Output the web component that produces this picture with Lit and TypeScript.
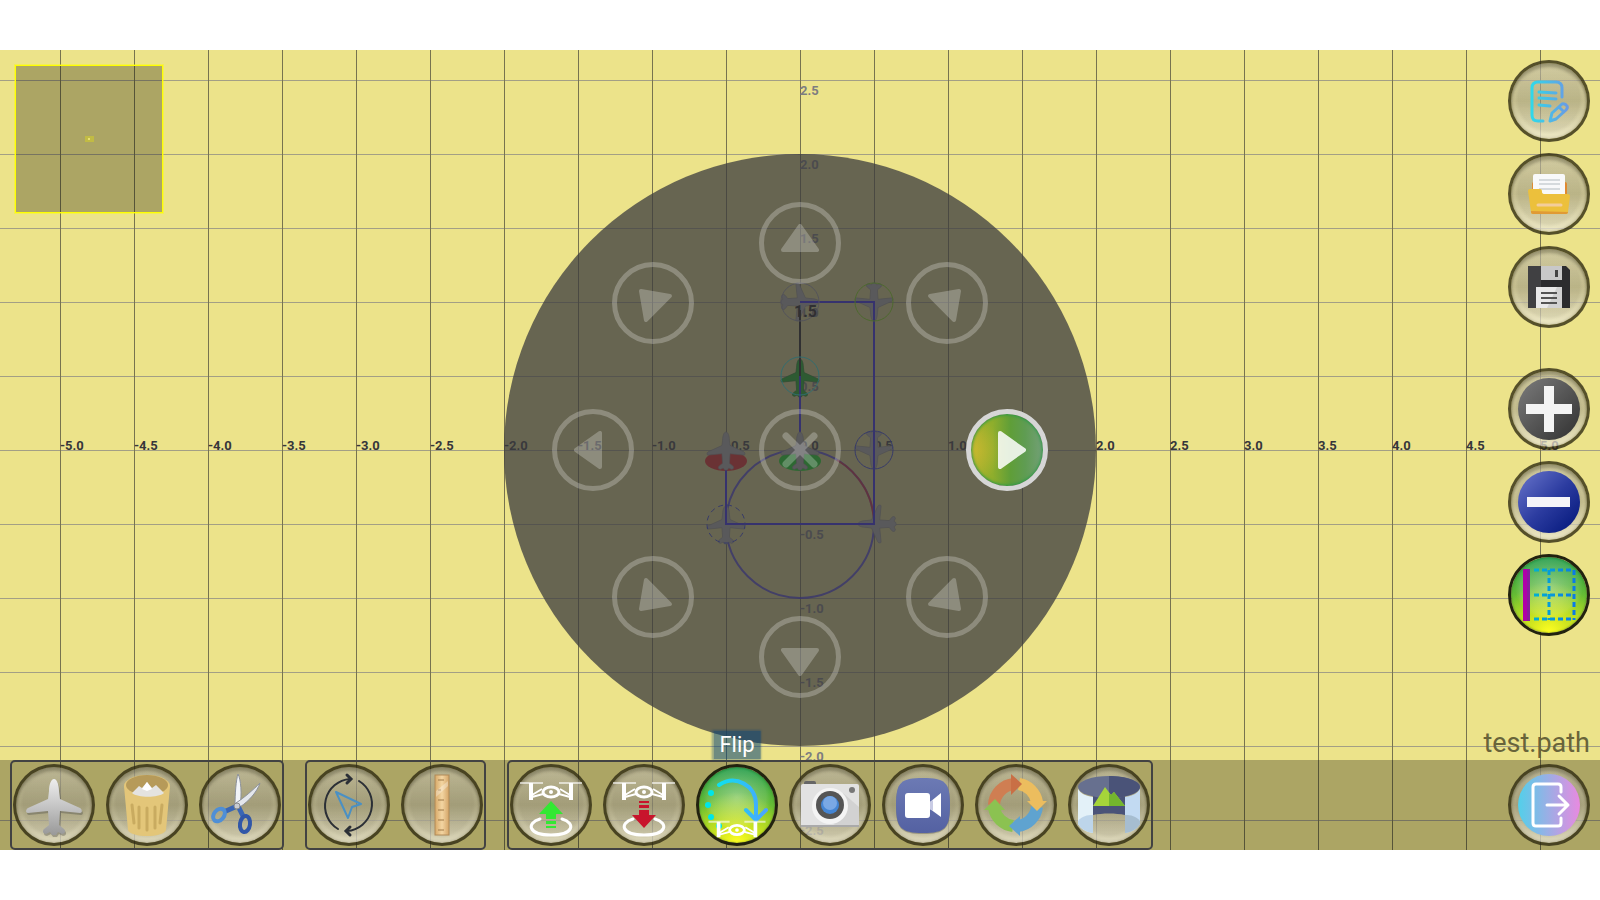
import { LitElement, html, svg, css, type TemplateResult, type SVGTemplateResult } from "lit";
import { customElement, state } from "lit/decorators.js";
import { classMap } from "lit/directives/class-map.js";

const CELL = 74;

const PLANE =
  "M0 -28C3 -28 5 -22 5 -16L6 -8L26 1C28 2 29 6 26 6L6 4L5 18L10 22C12 24 11 27 8 27L4 25L2 28H-2L-4 25L-8 27C-11 27 -12 24 -10 22L-5 18L-6 4L-26 6C-29 6 -28 2 -26 1L-6 -8L-5 -16C-5 -22 -3 -28 0 -28Z";

/* Quadcopter outline centred on its body. */
const drone = svg`
  <g fill="none" stroke="#fff">
    <path d="M-31 -9H-8M8 -9H31" stroke-width="2" stroke-opacity=".6"/>
    <path d="M-20 -9V8M20 -9V8" stroke-width="4"/>
    <path d="M-19 3L-9 -3M19 3L9 -3M-19 5L-8 2M19 5L8 2" stroke-width="2"/>
    <ellipse rx="8" ry="5" stroke-width="3"/>
    <circle r="2" fill="#fff" stroke="none"/>
  </g>`;

const landingRing = svg`<path d="M30 55C16 59 18 71 41 71S66 59 52 55" fill="none" stroke="#fff" stroke-width="3" stroke-linecap="round"/>`;

const icons: Record<string, SVGTemplateResult> = {
  plane: svg`
    <defs><linearGradient id="pl" x2="0" y2="1"><stop stop-color="#eee"/><stop offset="1" stop-color="#999"/></linearGradient></defs>
    <path d=${PLANE} transform="translate(42 45)" fill="#444" opacity=".35"/>
    <path d=${PLANE} transform="translate(41 43)" fill="url(#pl)"/>`,
  trash: svg`
    <path d="M18 22L22 66C25 74 57 74 60 66L64 22Z" fill="#e3c679"/>
    <ellipse cx="41" cy="22" rx="23" ry="11" fill="#e3c679"/>
    <ellipse cx="41" cy="21" rx="21" ry="10" fill="#b69a59"/>
    <path d="M26 29L33 22L36 24L41 18L46 24L50 21L58 29C52 34 32 34 26 29Z" fill="#e4e3e0"/>
    <path d="M36 25L41 18L46 25L41 27Z" fill="#fff"/>
    <path d="M26 41L28 59M33 43V64M41 44V66M49 43V64M56 41L54 59" stroke="#c9ab60" stroke-width="3" stroke-linecap="round"/>`,
  cut: svg`
    <path d="M39 10C42 16 43 30 41 42H36C36 30 37 16 39 10Z" fill="#f2f4f7" stroke="#8d929b"/>
    <path d="M61 19C58 28 50 37 41 43L37 39C45 34 55 25 61 19Z" fill="#e4e7ec" stroke="#8d929b"/>
    <path d="M36 43L27 47M40 44L44 52" stroke="#3a66b4" stroke-width="5" stroke-linecap="round"/>
    <ellipse cx="20" cy="51" rx="5" ry="7" transform="rotate(40 20 51)" fill="none" stroke="#4f8fd6" stroke-width="4"/>
    <ellipse cx="46" cy="60" rx="5" ry="8" transform="rotate(8 46 60)" fill="none" stroke="#3157a8" stroke-width="4"/>
    <circle cx="38" cy="42" r="3" fill="#c9ccd2" stroke="#888"/>`,
  rotate: svg`
    <path d="M30 65A27 27 0 0 1 42 15M51 17A27 27 0 0 1 39 67" fill="none" stroke="#2b2f36" stroke-width="2" stroke-linecap="round"/>
    <path d="M39 11L43 15L39 19M42 63L38 67L42 71" fill="none" stroke="#2b2f36" stroke-width="3" stroke-linecap="round"/>
    <path d="M28 28L53 40L44 43L40 54Z" fill="none" stroke="#4a90c4" stroke-width="2" stroke-linejoin="round"/>`,
  ruler: svg`
    <defs><linearGradient id="ru"><stop stop-color="#d8a968"/><stop offset=".5" stop-color="#f3d5a2"/><stop offset="1" stop-color="#d4a568"/></linearGradient></defs>
    <rect x="34" y="11" width="14" height="60" fill="url(#ru)" stroke="#b08a58"/>
    <path d="M37 16H43M37 26H40M37 36H43M37 46H43M37 56H43M37 66H43" stroke="#a07a48" stroke-width="1"/>
    <path d="M35 27L47 17V22L35 33Z" fill="#fff" opacity=".3"/>`,
  takeoff: svg`
    <g transform="translate(41 28)">${drone}</g>${landingRing}
    <path d="M41 37L53 50H46V55H36V50H29ZM36 57H46V60H36ZM36 62H46V64H36Z" fill="#33e833"/>`,
  land: svg`
    <g transform="translate(41 28)">${drone}</g>${landingRing}
    <path d="M41 64L29 51H36V46H46V51H53ZM36 41H46V44H36ZM36 37H46V39H36Z" fill="#c8142c"/>`,
  flip: svg`
    <g fill="#00e5e8"><circle cx="15" cy="29" r="3"/><circle cx="12" cy="41" r="3"/><circle cx="15" cy="53" r="3"/><circle cx="23" cy="62" r="3"/></g>
    <defs><linearGradient id="fl"><stop stop-color="#0fe0ee"/><stop offset="1" stop-color="#4aa4ff"/></linearGradient></defs>
    <path d="M23 21C40 10 60 22 60 40V55M50 46L60 56L70 46" fill="none" stroke="url(#fl)" stroke-width="4" stroke-linecap="round" stroke-linejoin="round"/>
    <g transform="translate(41 66) scale(.92)">${drone}</g>`,
  camera: svg`
    <rect x="15" y="17" width="12" height="6" rx="2" fill="#666"/>
    <rect x="12" y="20" width="58" height="43" rx="2" fill="#e2e2e2"/>
    <path d="M54 29L70 43V61Q70 63 68 63H50L29 52Z" fill="#c8c8c8" opacity=".6"/>
    <path d="M12 61H70V63H12Z" fill="#aaa"/>
    <circle cx="63" cy="26" r="3" fill="#777"/>
    <circle cx="41" cy="42" r="18" fill="#f4f4f4"/><circle cx="41" cy="41" r="14" fill="#555"/>
    <circle cx="41" cy="41" r="9" fill="#4485d4"/><circle cx="41" cy="39" r="7" fill="#7aa8e4"/>`,
  video: svg`
    <defs><linearGradient id="vi" x2="0" y2="1"><stop stop-color="#6c7ab4"/><stop offset="1" stop-color="#5461a2"/></linearGradient></defs>
    <path d="M41 15C63 15 68 19 68 42S63 70 41 70S14 65 14 42S19 15 41 15Z" fill="#333" opacity=".3"/>
    <path d="M41 14C63 14 68 18 68 41S63 69 41 69S14 64 14 41S19 14 41 14Z" fill="url(#vi)"/>
    <path d="M26 29H45Q48 29 48 32V38L59 29V53L48 45V51Q48 54 45 54H26Q23 54 23 51V32Q23 29 26 29Z" fill="#fff"/>
    <path d="M48 38L51 36V47L48 45Z" fill="#c8cbe4"/>`,
  cycle: svg`
    <g fill="none" stroke-width="12">
      <path d="M19 41A22 22 0 0 1 39 20" stroke="#cf7e52"/>
      <path d="M44 20A22 22 0 0 1 62 38" stroke="#ecbd5e"/>
      <path d="M62 43A22 22 0 0 1 43 62" stroke="#5fa3d0"/>
      <path d="M38 62A22 22 0 0 1 19 44" stroke="#8bc251"/>
    </g>
    <path d="M36 10L47 20L36 31Z" fill="#c96f45"/><path d="M52 37H72L62 47Z" fill="#ecbd5e"/>
    <path d="M45 52V72L34 62Z" fill="#5fa3d0"/><path d="M9 46L20 35L30 46Z" fill="#8bc251"/>`,
  panorama: svg`
    <path d="M25 32H57V51C48 49 34 49 25 51Z" fill="#4a5378"/>
    <ellipse cx="41" cy="23" rx="31" ry="11" fill="#67708f"/>
    <path d="M41 12C58 12 72 17 72 23S58 34 41 34Z" fill="#4a5378"/>
    <path d="M25 42L37 23L43 31L46 28L57 42Z" fill="#a6d53a"/><path d="M41 29L43 31L46 28L57 42H41Z" fill="#74b62e"/>
    <path d="M10 25C13 30 18 32 25 33V69C18 68 13 65 10 60Z" fill="#e3f1f8"/>
    <path d="M10 57C14 52 19 51 25 51V69C18 68 13 65 10 60Z" fill="#bdd5ea"/>
    <path d="M72 25C69 30 64 32 57 33V69C64 68 69 65 72 60Z" fill="#c2daf2"/>
    <path d="M72 57C68 52 63 51 57 51V69C64 68 69 65 72 60Z" fill="#a6bdd0"/>`,
  notes: svg`
    <defs><linearGradient id="no" gradientUnits="userSpaceOnUse" x1="24" x2="60"><stop stop-color="#30d8ea"/><stop offset="1" stop-color="#6a9ae4"/></linearGradient></defs>
    <g fill="none" stroke="url(#no)" stroke-width="3" stroke-linecap="round" stroke-linejoin="round">
      <path d="M35 61H30Q24 61 24 55V28Q24 22 30 22H48Q54 22 54 28V37"/>
      <path d="M31 32L48 33M31 38L48 39M31 45L42 46"/>
      <path d="M42 61L44 53L54 44Q57 43 59 46Q60 48 58 50L48 59ZM51 47L55 51"/>
    </g>`,
  folder: svg`
    <rect x="24" y="29" width="35" height="20" rx="2" fill="#e08a30"/>
    <rect x="25" y="21" width="32" height="26" rx="2" fill="#f8f9fa"/>
    <path d="M31 27H52M31 31H52M31 36H52" stroke="#d5dadd" stroke-width="2"/>
    <path d="M22 36H32Q34 36 34 39Q34 41 37 41H60Q62 41 62 43L60 59Q60 61 57 61H25Q23 61 23 59L20 38Q20 36 22 36Z" fill="#ecc03c"/>
    <path d="M23 58L23 59Q23 61 25 61H57Q60 61 60 59Z" fill="#e09a35"/>
    <path d="M30 52H53" stroke="#f3cd9c" stroke-width="3" stroke-linecap="round"/>`,
  save: svg`
    <path d="M20 20H58L62 24V62H20Z" fill="#2c2c2e"/><path d="M20 20H33V41H28V62H20Z" fill="#404042"/>
    <path d="M33 20H54V34H33Z" fill="#c8c8c8"/><path d="M47 24H50V31H47Z" fill="#444"/>
    <path d="M28 41H54V62H28Z" fill="#e9e9e9"/><path d="M49 41H54V62H39Z" fill="#d2d2d2"/>
    <path d="M33 47H49M33 52H49M33 57H49" stroke="#555" stroke-width="2"/>`,
  plus: svg`
    <defs><linearGradient id="ps" x2="1" y2="1"><stop stop-color="#7c7c7c"/><stop offset="1" stop-color="#303030"/></linearGradient></defs>
    <circle cx="41" cy="41" r="31" fill="url(#ps)"/><path d="M36 18H46V36H64V46H46V64H36V46H18V36H36Z" fill="#f4f4f4"/>`,
  minus: svg`
    <defs><linearGradient id="mi" x2="1" y2="1"><stop stop-color="#6a76cc"/><stop offset=".5" stop-color="#2c3ca0"/><stop offset="1" stop-color="#001478"/></linearGradient></defs>
    <circle cx="41" cy="41" r="31" fill="url(#mi)"/><path d="M19 36H62V46H19Z" fill="#f4f4f8"/>`,
  grid: svg`
    <defs><linearGradient id="gr" gradientUnits="userSpaceOnUse" x1="24" x2="66"><stop stop-color="#00b4d0"/><stop offset="1" stop-color="#0a7ae6"/></linearGradient></defs>
    <path d="M26 16H66M26 41H66M26 65H66M41 16V66M66 16V66" fill="none" stroke="url(#gr)" stroke-width="3" stroke-dasharray="5 3"/>
    <path d="M15 15H22V67H15Z" fill="#b000a8"/><path d="M19 15H22V67H19Z" fill="#8a1aa0"/>`,
  exit: svg`
    <defs><linearGradient id="ex"><stop stop-color="#52d0ea"/><stop offset="1" stop-color="#e88ae0"/></linearGradient></defs>
    <circle cx="41" cy="41" r="31" fill="url(#ex)"/>
    <path d="M53 28V23Q53 20 50 20H28Q25 20 25 23V59Q25 62 28 62H50Q53 62 53 59V54M39 41H60M51 32L60 41L51 50" fill="none" stroke="#fff" stroke-width="3" stroke-linecap="round" stroke-linejoin="round"/>`,
};

interface Tool { id: string; icon: string; label: string }

const GROUPS: Tool[][] = [
  [
    { id: "waypoint", icon: "plane", label: "Waypoint" },
    { id: "delete", icon: "trash", label: "Delete" },
    { id: "split", icon: "cut", label: "Split" },
  ],
  [
    { id: "rotate", icon: "rotate", label: "Rotate" },
    { id: "measure", icon: "ruler", label: "Measure" },
  ],
  [
    { id: "takeoff", icon: "takeoff", label: "Take off" },
    { id: "land", icon: "land", label: "Land" },
    { id: "flip", icon: "flip", label: "Flip" },
    { id: "photo", icon: "camera", label: "Photo" },
    { id: "video", icon: "video", label: "Video" },
    { id: "cycle", icon: "cycle", label: "Cycle" },
    { id: "panorama", icon: "panorama", label: "Panorama" },
  ],
];

const FILE_TOOLS: Tool[] = [
  { id: "notes", icon: "notes", label: "Edit notes" },
  { id: "open", icon: "folder", label: "Open" },
  { id: "save", icon: "save", label: "Save" },
];
const VIEW_TOOLS: Tool[] = [
  { id: "in", icon: "plus", label: "Zoom in" },
  { id: "out", icon: "minus", label: "Zoom out" },
  { id: "grid", icon: "grid", label: "Snap to grid" },
];

const range = (from: number, to: number) => Array.from({ length: to - from + 1 }, (_, i) => from + i);

@customElement("flight-map")
export class FlightMap extends LitElement {
  static styles = css`
    :host { display: block; }
    .map { display: block; width: 100%; height: 100%; }
    .v { stroke: #77734f; stroke-width: 1; shape-rendering: crispEdges; }
    .h { stroke: #a39f85; stroke-width: 1; shape-rendering: crispEdges; }
    .axis { font: 700 13px Roboto, sans-serif; }
    .ax { fill: #36363a; }
    .ay { fill: #7d7d80; }
    .alt { font: 700 16px Roboto, sans-serif; fill: #111; }
    .leg { fill: none; stroke: #2818ff; stroke-width: 2; }
    .dark { stroke: #111; }
    .arc { fill: none; stroke: #2818ff; stroke-width: 2; stroke-opacity: 0.75; }
    .red { stroke: #f01010; }
    .craft { fill: #b4b4b4; stroke: #8c8c8c; }
    .lead { fill: #04b810; stroke: #067810; }
    .mark { fill: none; stroke-width: 1; }
  `;

  private craft(x: number, y: number, turn = 0, lead = false) {
    return svg`<path class=${lead ? "lead" : "craft"} d=${PLANE} transform="translate(${x} ${y}) rotate(${turn}) scale(.68)"/>`;
  }

  render() {
    return html`<svg class="map" viewBox="-800 -400 1600 800" preserveAspectRatio="xMidYMid slice" role="img" aria-label="Flight path">
      ${range(-5, 5).map((i) => svg`<line class="h" x1="-800" x2="800" y1=${i * CELL} y2=${i * CELL}/>`)}
      ${range(-10, 10).map((i) => svg`<line class="v" y1="-400" y2="400" x1=${i * CELL} x2=${i * CELL}/>`)}
      ${range(-5, 5).map((i) => svg`<text class="axis ay" x="0" y=${15 - i * CELL}>${(i / 2).toFixed(1)}</text>`)}
      ${range(-10, 10).map((i) => svg`<text class="axis ax" x=${i * CELL} y="0">${(i / 2).toFixed(1)}</text>`)}
      <ellipse cx="-74" cy="11" rx="21" ry="10" fill="#f81818"/>
      <ellipse cx="0" cy="11" rx="21" ry="10" fill="#04f010"/>
      <circle class="arc" cy="74" r="74"/>
      <path class="arc red" d="M37 10A74 74 0 0 1 74 74"/>
      ${this.craft(0, -148, 90)} ${this.craft(74, -148, 180)} ${this.craft(0, -72, 0, true)}
      ${this.craft(74, 0, 180)} ${this.craft(77, 74, -90)} ${this.craft(-74, 75)}
      <path class="leg" d="M-74 10V74H74V-148H0M0 -74V0"/>
      <path class="leg dark" d="M0 -140V-74"/>
      ${this.craft(-74, 1)} ${this.craft(0, 1)}
      <circle class="mark" cy="-148" r="19" stroke="#9a9ab0"/>
      <circle class="mark" cx="74" cy="-148" r="19" stroke="#80f000"/>
      <circle class="mark" cy="-74" r="19" stroke="#18ffff"/>
      <circle class="mark" cx="74" r="19" stroke="#2838e8"/>
      <circle class="mark" cx="-74" cy="74" r="19" stroke="#2838e8" stroke-dasharray="5 4"/>
      <text class="alt" x="-6" y="-133">1.5</text>
    </svg>`;
  }
}

@customElement("app-root")
export class AppRoot extends LitElement {
  @state() private tool = "flip";
  @state() private direction = 90;

  static styles = css`
    :host {
      display: grid;
      align-items: center;
      min-height: 100vh;
      background: #fff;
      font-family: Roboto, sans-serif;
    }
    .stage {
      display: grid;
      aspect-ratio: 2 / 1;
      overflow: hidden;
      background: #ece38a;
    }
    .stage > * { grid-area: 1 / 1; min-width: 0; min-height: 0; }
    button { padding: 0; margin: 0; font: inherit; cursor: pointer; }

    .wheel {
      position: relative;
      place-self: center;
      width: 37%;
      aspect-ratio: 1;
      border-radius: 50%;
      background: rgba(59, 59, 62, 0.75);
    }
    .spoke {
      position: absolute;
      width: 82px;
      height: 82px;
      transform: translate(-50%, -50%);
      box-sizing: border-box;
      border: 5px solid rgba(255, 255, 255, 0.25);
      border-radius: 50%;
      background: none;
    }
    .spoke svg { display: block; width: 72px; height: 72px; }
    .glyph { fill: #fff; stroke: #fff; stroke-width: 4; stroke-linejoin: round; stroke-linecap: round; opacity: 0.25; }
    .cross { stroke-width: 7; }
    .spoke.on {
      border-color: #d6d6d6;
      background:
        radial-gradient(circle at 0% 50%, rgba(230, 190, 50, 0.6), transparent 40%),
        linear-gradient(90deg, #a4b02c, #8fae2c 30%, #5f9e38 55%, #5f9c52 75%, #74a078);
      background-clip: padding-box;
      box-shadow: inset 0 0 3px 1px #2f9a48;
    }
    .on .glyph { opacity: 0.85; }

    .ui { position: relative; display: flex; flex-direction: column; pointer-events: none; }
    .ui button { pointer-events: auto; }
    .upper {
      flex: 1;
      display: flex;
      justify-content: space-between;
      align-items: stretch;
      padding: 10px 10px 0 15px;
    }
    .mini {
      display: grid;
      place-items: center;
      width: 148px;
      height: 148px;
      margin-top: 5px;
      box-sizing: border-box;
      border: 1px solid #ff0;
      outline: 1px solid rgba(255, 255, 0, 0.4);
      background: rgba(0, 0, 0, 0.27);
    }
    .view {
      display: grid;
      place-items: center;
      width: 9px;
      height: 6px;
      background: rgba(225, 220, 20, 0.4);
    }
    .view::after { content: ""; width: 2px; height: 2px; background: #e8e070; }
    .side { display: flex; flex-direction: column; align-items: flex-end; }
    .stack { display: grid; gap: 11px; }
    .stack + .stack { margin-top: 40px; }
    .file { margin-top: auto; font-size: 27px; line-height: 34px; color: #68643a; }

    .bar {
      display: flex;
      align-items: center;
      gap: 21px;
      padding: 0 10px;
      background: rgba(0, 0, 0, 0.27);
    }
    .group {
      display: flex;
      align-items: center;
      gap: 11px;
      height: 90px;
      box-sizing: border-box;
      padding: 0 1px;
      border: 2px solid #424242;
      border-radius: 5px;
    }
    .exit { margin-left: auto; display: flex; }

    .orb {
      position: relative;
      display: block;
      width: 82px;
      height: 82px;
      box-sizing: border-box;
      border: 3px solid rgba(48, 43, 18, 0.8);
      border-radius: 50%;
      background:
        radial-gradient(ellipse 34px 36px at 50% 46%, rgba(80, 74, 50, 0.08) 90%, transparent 100%),
        linear-gradient(rgba(212, 207, 188, 0.65), rgba(168, 163, 145, 0.6) 50%, rgba(238, 234, 218, 0.75));
      background-clip: padding-box;
      box-shadow: inset 0 4px 3px rgba(60, 55, 35, 0.32), inset 0 0 3px rgba(60, 55, 35, 0.4);
    }
    .orb.on {
      border-color: #22220f;
      background:
        radial-gradient(ellipse 34px 32px at 50% 40%, rgba(255, 255, 255, 0.36), rgba(255, 255, 255, 0.12) 85%, transparent 100%),
        radial-gradient(circle at 50% 100%, #ff2 0, rgba(225, 235, 30, 0.8) 22%, transparent 60%),
        linear-gradient(#1f9a48, #66bc34 50%, #a8d820);
      background-clip: padding-box;
      box-shadow: inset 0 0 2px rgba(20, 60, 10, 0.5);
    }
    .orb svg { position: absolute; inset: -3px; width: 82px; height: 82px; }
    .tip {
      position: absolute;
      left: 50%;
      bottom: 100%;
      margin-bottom: 8px;
      padding: 0 6px;
      transform: translateX(-50%);
      font-size: 22px;
      line-height: 28px;
      color: #fff;
      background: rgba(8, 68, 120, 0.55);
      box-shadow: 0 0 2px 1px rgba(8, 68, 120, 0.4);
    }
  `;

  private orb(t: Tool, on: boolean, tip = false): TemplateResult {
    return html`<button class=${classMap({ orb: true, on })} aria-label=${t.label} @click=${() => this.pick(t.id)}>
      <svg viewBox="0 0 82 82" aria-hidden="true">${icons[t.icon]}</svg>
      ${tip ? html`<span class="tip">${t.label}</span>` : null}
    </button>`;
  }

  private pick(id: string) {
    if (GROUPS.some((g) => g.some((t) => t.id === id))) this.tool = id;
  }

  private spoke(angle: number) {
    const a = (angle * Math.PI) / 180;
    const left = 50 + 35 * Math.sin(a);
    const top = 50 - 35 * Math.cos(a);
    return html`<button
      class=${classMap({ spoke: true, on: this.direction === angle })}
      style="left:${left}%;top:${top}%"
      aria-label="Direction ${angle}°"
      @click=${() => (this.direction = angle)}
    >
      <svg viewBox="-36 -36 72 72"><path class="glyph" transform="rotate(${angle})" d="M0 -17L17 7H-17Z"/></svg>
    </button>`;
  }

  render() {
    return html`<main class="stage">
      <flight-map></flight-map>
      <div class="wheel">
        ${range(0, 7).map((i) => this.spoke(i * 45))}
        <button class="spoke" style="left:50%;top:50%" aria-label="Cancel">
          <svg viewBox="-36 -36 72 72"><path class="glyph cross" d="M-14 -14L14 14M14 -14L-14 14"/></svg>
        </button>
      </div>
      <div class="ui">
        <div class="upper">
          <div class="mini"><div class="view"></div></div>
          <div class="side">
            <div class="stack">${FILE_TOOLS.map((t) => this.orb(t, false))}</div>
            <div class="stack">${VIEW_TOOLS.map((t) => this.orb(t, t.id === "grid"))}</div>
            <div class="file">test.path</div>
          </div>
        </div>
        <div class="bar" role="toolbar">
          ${GROUPS.map((g) => html`<div class="group">${g.map((t) => this.orb(t, this.tool === t.id, this.tool === t.id))}</div>`)}
          <div class="exit">${this.orb({ id: "exit", icon: "exit", label: "Exit" }, false)}</div>
        </div>
      </div>
    </main>`;
  }
}
